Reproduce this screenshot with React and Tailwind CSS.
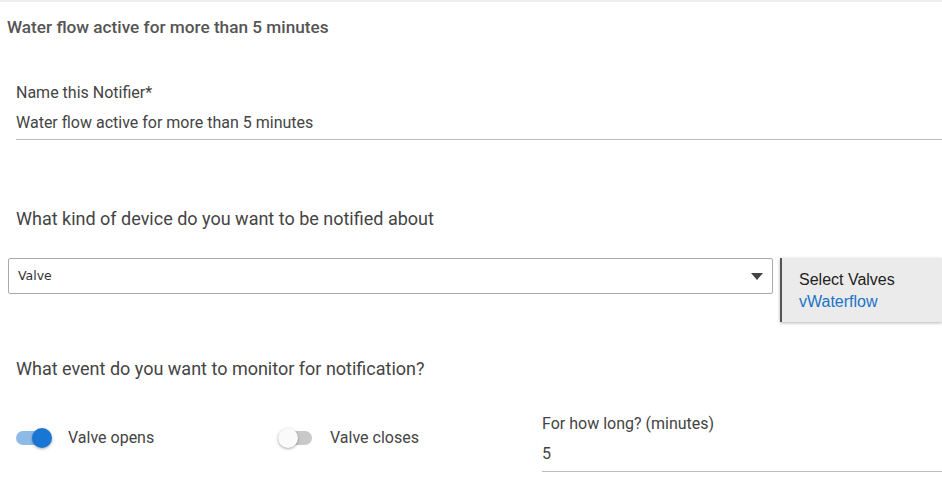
import React from 'react'

const roboto = { fontFamily: 'Roboto, "Liberation Sans", sans-serif' }

function Toggle({ on }) {
  return (
    <div className="relative w-[36px] h-[20px] flex items-center">
      <div className={`w-[34px] h-[14px] rounded-full ${on ? 'bg-[#8dbbe8]' : 'bg-[#c9c9c9]'}`} />
      <div
        className={`absolute top-0 w-[20px] h-[20px] rounded-full shadow-[0_1px_3px_rgba(0,0,0,0.35)] ${
          on ? 'left-[16px] bg-[#1976d2]' : 'left-0 bg-[#fafafa]'
        }`}
      />
    </div>
  )
}

export default function App() {
  return (
    <div className="w-[942px] h-[487px] bg-white overflow-hidden text-[#444]" style={roboto}>
      <div className="h-[2px] bg-[#eeeeee]" />

      {/* Header */}
      <div className="pl-[7px] pt-[15px] text-[17.2px] font-medium text-[#555] leading-[20px]">
        Water flow active for more than 5 minutes
      </div>

      {/* Name field */}
      <div className="pl-[16px] mt-[46px]">
        <div className="text-[16px] leading-[20px]">Name this Notifier*</div>
        <div className="text-[16px] leading-[20px] mt-[10px]">Water flow active for more than 5 minutes</div>
        <div className="h-px bg-[#bdbdbd] mt-[6px]" />
      </div>

      {/* Device type */}
      <div className="pl-[16px] mt-[67px] text-[18px] leading-[24px]">
        What kind of device do you want to be notified about
      </div>

      <div className="flex items-start mt-[27px]">
        <div className="ml-[8px] w-[765px] h-[36px] border border-[#aaaaaa] rounded-[2px] flex items-center justify-between pl-[9px] pr-[9px]">
          <span className="text-[#333]" style={{ fontFamily: '"DejaVu Sans", "Liberation Sans", sans-serif', fontSize: '12.5px' }}>Valve</span>
          <svg width="12" height="7" viewBox="0 0 12 7"><path d="M0 0h12L6 7z" fill="#444" /></svg>
        </div>
        <div
          className="ml-[7px] flex-1 h-[64px] bg-[#ebebeb] border-l-2 border-[#555] shadow-[0_1px_3px_rgba(0,0,0,0.3)] pl-[17px] pt-[12px]"
          style={{ fontFamily: '"Liberation Sans", Arial, sans-serif' }}
        >
          <div className="text-[16px] leading-[20px] text-[#222]">Select Valves</div>
          <div className="text-[16px] leading-[20px] text-[#1a73c8] mt-[2px]">vWaterflow</div>
        </div>
      </div>

      {/* Event */}
      <div className="pl-[16px] mt-[35px] text-[18px] leading-[24px]">
        What event do you want to monitor for notification?
      </div>

      <div className="flex items-start mt-[33px]">
        <div className="w-[278px] pl-[16px] pt-[14px] flex items-center gap-[16px]">
          <Toggle on />
          <span className="text-[16px] leading-[20px]">Valve opens</span>
        </div>
        <div className="w-[264px] pt-[14px] flex items-center gap-[16px]">
          <Toggle on={false} />
          <span className="text-[16px] leading-[20px]">Valve closes</span>
        </div>
        <div className="flex-1">
          <div className="text-[16px] leading-[20px]">For how long? (minutes)</div>
          <div className="text-[16px] leading-[20px] mt-[10px]">5</div>
          <div className="h-px bg-[#bdbdbd] mt-[7px]" />
        </div>
      </div>
    </div>
  )
}
